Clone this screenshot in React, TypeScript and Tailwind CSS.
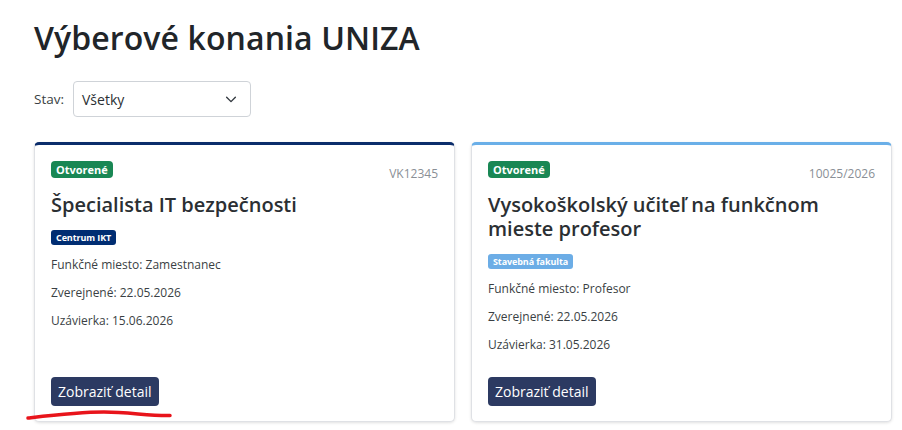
import React from "react";

type Job = {
  id: string;
  code: string;
  title: string;
  unit: string;
  unitClass: string;
  accent: string;
  position: string;
  published: string;
  deadline: string;
};

const jobs: Job[] = [
  {
    id: "a",
    code: "VK12345",
    title: "Špecialista IT bezpečnosti",
    unit: "Centrum IKT",
    unitClass: "bg-[#002d72]",
    accent: "border-t-[#0b2d6b]",
    position: "Zamestnanec",
    published: "22.05.2026",
    deadline: "15.06.2026",
  },
  {
    id: "b",
    code: "10025/2026",
    title: "Vysokoškolský učiteľ na funkčnom mieste profesor",
    unit: "Stavebná fakulta",
    unitClass: "bg-[#6cade6]",
    accent: "border-t-[#6aafe8]",
    position: "Profesor",
    published: "22.05.2026",
    deadline: "31.05.2026",
  },
];

function JobCard({ job }: { job: Job }) {
  return (
    <article
      className={`flex flex-col rounded-[5px] border border-[#dfe1e5] border-t-[3px] ${job.accent} bg-white px-[16px] pt-[16px] pb-[15px] shadow-[0_1px_3px_rgba(0,0,0,0.12)]`}
    >
      <div className="flex items-start justify-between">
        <span className="rounded-[4px] bg-[#198754] px-[5px] py-[2px] text-[11px] font-bold leading-[13px] text-white">
          Otvorené
        </span>
        <span className="pt-[5px] text-[12px] leading-[16px] text-[#8a8f96]">
          {job.code}
        </span>
      </div>
      <h2 className="mt-[11px] text-[20px] leading-[24px] font-semibold text-[#2b2f33]">
        {job.title}
      </h2>
      <div className="mt-[13px] flex">
        <span
          className={`rounded-[3px] ${job.unitClass} px-[5px] py-[2px] text-[9px] font-bold leading-[11px] tracking-[-0.1px] text-white`}
        >
          {job.unit}
        </span>
      </div>
      <div className="mt-[12px] flex flex-col gap-[12px] text-[12px] leading-[16px] text-[#3a3f44]">
        <p>Funkčné miesto: {job.position}</p>
        <p>Zverejnené: {job.published}</p>
        <p>Uzávierka: {job.deadline}</p>
      </div>
      <div className="mt-auto flex pt-[24px]">
        <button className="rounded-[4px] bg-[#2c3a62] px-[7px] py-[5px] text-[14px] leading-[19px] text-white">
          Zobraziť detail
        </button>
      </div>
    </article>
  );
}

export default function App() {
  return (
    <div
      className="relative min-h-[430px] w-full bg-white pl-[34px] pr-[10px] pt-[18px] text-[#212529]"
      style={{ fontFamily: '"Open Sans", "Noto Sans", sans-serif' }}
    >
      <h1 className="text-[32px] leading-[40px] font-semibold tracking-[0.1px] text-[#212529]">
        Výberové konania UNIZA
      </h1>

      <div className="mt-[23px] flex items-center gap-[9px]">
        <label className="text-[13.5px] text-[#3a3f44]">Stav:</label>
        <div className="flex h-[36px] w-[178px] items-center justify-between rounded-[4px] border border-[#cfd3d8] bg-white pl-[8px] pr-[12px]">
          <span className="text-[14px] text-[#2b2f33]">Všetky</span>
          <svg width="14" height="14" viewBox="0 0 16 16" fill="none">
            <path
              d="M3 6l5 5 5-5"
              stroke="#343a40"
              strokeWidth="1.6"
              strokeLinecap="round"
              strokeLinejoin="round"
            />
          </svg>
        </div>
      </div>

      <div className="mt-[25px] grid grid-cols-2 gap-[16px]">
        {jobs.map((job) => (
          <JobCard key={job.id} job={job} />
        ))}
      </div>

      {/* red hand-drawn underline annotation */}
      <svg
        className="absolute left-[24px] top-[404px]"
        width="152"
        height="18"
        viewBox="0 0 152 18"
        fill="none"
      >
        <path
          d="M4 14 C 30 11, 55 8, 80 8 C 105 8, 125 12, 146 11.5"
          stroke="#e8141b"
          strokeWidth="3.5"
          strokeLinecap="round"
        />
      </svg>
    </div>
  );
}
